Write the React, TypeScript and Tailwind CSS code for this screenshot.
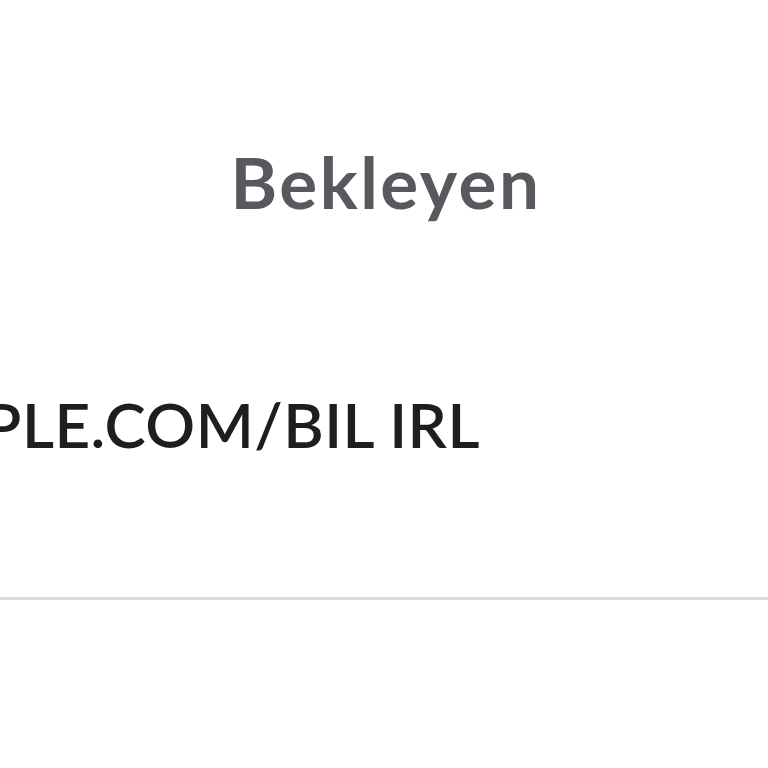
export default function App() {
  return (
    <div className="w-[768px] h-[768px] bg-white overflow-hidden font-['Lato',sans-serif]">
      <div className="pt-[146px] flex justify-center pl-[4px]">
        <span className="text-[71px] leading-none font-bold text-[#58585f] tracking-[2.5px]">
          Bekleyen
        </span>
      </div>
      <div className="mt-[176px] w-[480px] flex justify-end">
        <span className="text-[62px] leading-none font-semibold text-[#1e1e1e] whitespace-nowrap tracking-[0.5px]">
          EXAMPLE.COM/BIL IRL
        </span>
      </div>
      <div className="mt-[142px] h-[3px] bg-[#dcdcdc]" />
    </div>
  );
}
